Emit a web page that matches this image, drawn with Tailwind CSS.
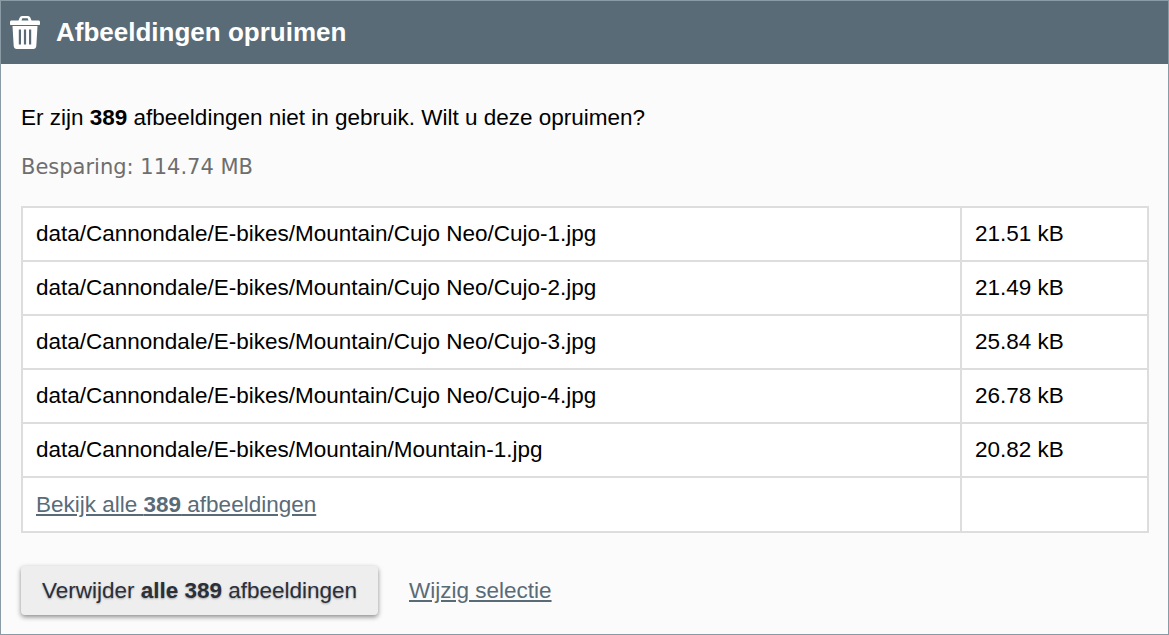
<!DOCTYPE html>
<html lang="nl">
<head>
  <meta charset="UTF-8" />
  <title>Afbeeldingen opruimen</title>
  <script src="https://cdn.jsdelivr.net/npm/@tailwindcss/browser@4"></script>
</head>
<body class="bg-[#fbfbfb] font-['Liberation_Sans',Arial,sans-serif] overflow-hidden">
  <div class="h-[635px] w-[1169px] border border-[#8b9ba6] flex flex-col">
    <!-- header -->
    <div class="h-[63px] shrink-0 bg-[#5a6b78] flex items-center pl-[9px] text-white">
      <svg class="w-[30px] h-[33px] mt-[-1px]" viewBox="0 0 30 33" fill="currentColor">
        <path fill-rule="evenodd" d="M9.500 2C10 .7 11 0 12 0h6c1 0 2 .7 2.500 2L21.500 4.500h7C29.400 4.500 30 5.100 30 6V8c0 .6-.4 1-1 1H1C.4 9 0 8.600 0 8V6C0 5.100 .6 4.500 1.500 4.500H8.500ZM12.300 2.300 11.500 4.500h7l-.8-2.200ZM2.500 10h25L26.300 30c-.1 1.700-1.400 3-3 3H6.700c-1.600 0-2.900-1.300-3-3ZM8.800 13.500v15h2.200v-15ZM13.900 13.500v15h2.200v-15ZM19 13.500v15h2.200v-15Z"/>
      </svg>
      <h1 class="ml-[16px] text-[26px] font-bold">Afbeeldingen opruimen</h1>
    </div>

    <div class="flex-1 pl-[20px] pr-[19px]">
      <p class="mt-[40px] text-[22.5px] leading-[27px] text-black">Er zijn <strong>389</strong> afbeeldingen niet in gebruik. Wilt u deze opruimen?</p>
      <p class="mt-[23px] font-['DejaVu_Sans',sans-serif] text-[21px] leading-[27px] text-[#6e6e6e]">Besparing: 114.74 MB</p>

      <table class="mt-[25px] w-[1128px] table-fixed border-collapse bg-white text-[22.5px] text-black">
        <tbody>
          <tr class="h-[54px]">
            <td class="border-2 border-[#dddddd] pl-[13px] pr-[14px] w-[939px]">data/Cannondale/E-bikes/Mountain/Cujo Neo/Cujo-1.jpg</td>
            <td class="border-2 border-[#dddddd] pl-[13px] pr-[14px]">21.51 kB</td>
          </tr>
          <tr class="h-[54px]">
            <td class="border-2 border-[#dddddd] pl-[13px] pr-[14px]">data/Cannondale/E-bikes/Mountain/Cujo Neo/Cujo-2.jpg</td>
            <td class="border-2 border-[#dddddd] pl-[13px] pr-[14px]">21.49 kB</td>
          </tr>
          <tr class="h-[54px]">
            <td class="border-2 border-[#dddddd] pl-[13px] pr-[14px]">data/Cannondale/E-bikes/Mountain/Cujo Neo/Cujo-3.jpg</td>
            <td class="border-2 border-[#dddddd] pl-[13px] pr-[14px]">25.84 kB</td>
          </tr>
          <tr class="h-[54px]">
            <td class="border-2 border-[#dddddd] pl-[13px] pr-[14px]">data/Cannondale/E-bikes/Mountain/Cujo Neo/Cujo-4.jpg</td>
            <td class="border-2 border-[#dddddd] pl-[13px] pr-[14px]">26.78 kB</td>
          </tr>
          <tr class="h-[54px]">
            <td class="border-2 border-[#dddddd] pl-[13px] pr-[14px]">data/Cannondale/E-bikes/Mountain/Mountain-1.jpg</td>
            <td class="border-2 border-[#dddddd] pl-[13px] pr-[14px]">20.82 kB</td>
          </tr>
          <tr class="h-[55px]">
            <td class="border-2 border-[#dddddd] pl-[13px] pr-[14px]"><a href="#" class="underline text-[#5a6b78]">Bekijk alle <strong>389</strong> afbeeldingen</a></td>
            <td class="border-2 border-[#dddddd] pl-[13px] pr-[14px]"></td>
          </tr>
        </tbody>
      </table>

      <div class="mt-[33px] flex items-center">
        <button class="w-[357px] h-[49px] rounded-[4px] bg-[#eeeeee] text-[22.5px] text-[#2b2f3a] shadow-[0_2px_5px_rgba(0,0,0,0.45)] [text-shadow:0_1px_2px_rgba(0,0,0,0.3)]">Verwijder <strong>alle 389</strong> afbeeldingen</button>
        <a href="#" class="ml-[31px] text-[22.5px] underline text-[#5a6b78]">Wijzig selectie</a>
      </div>
    </div>
  </div>
</body>
</html>
